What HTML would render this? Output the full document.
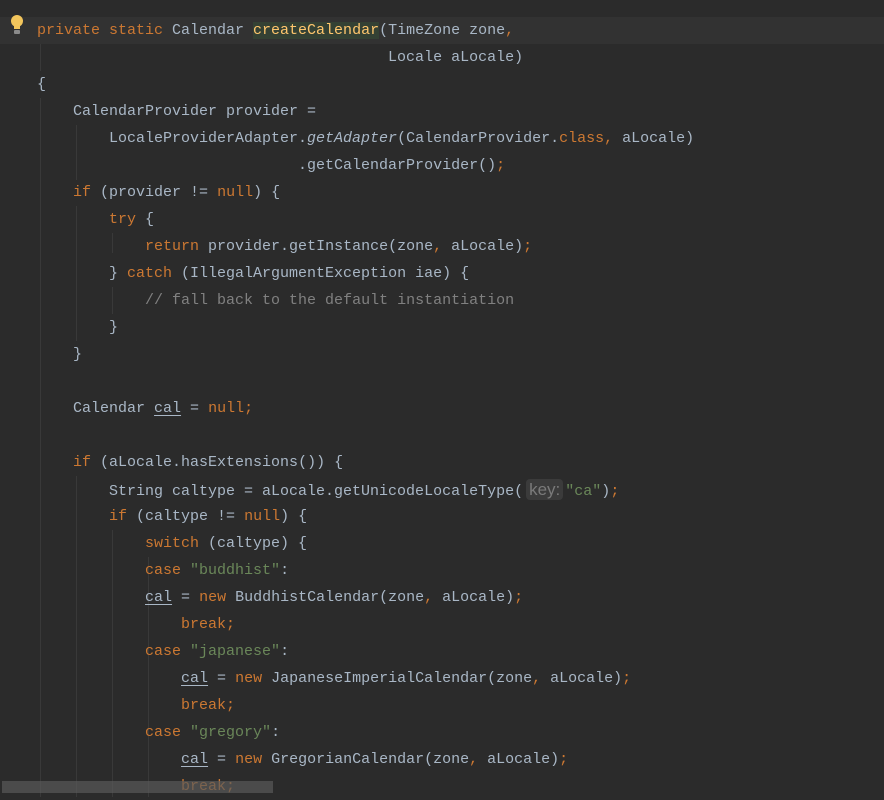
<!DOCTYPE html>
<html><head><meta charset="utf-8"><style>
html,body{margin:0;padding:0;}
body{width:884px;height:797px;background:#2b2b2b;overflow:hidden;position:relative;font-family:"Liberation Mono",monospace;font-size:15px;color:#a9b7c6;}
.cur{position:absolute;left:0;top:17px;width:884px;height:27px;background:#323232;}
.g{position:absolute;width:1px;background:#393939;}
.l{position:absolute;left:37px;height:27px;line-height:27px;white-space:pre;}
.k{color:#cc7832}.s{color:#6a8759}.c{color:#808080}.m{color:#ffc66d;background:#344134}.i{font-style:italic}
.u{text-decoration:underline;text-underline-offset:3px}
.h{font-family:"Liberation Sans",sans-serif;font-size:17px;color:#7a7a7a;background:#3b3b3b;border-radius:4px;padding:1px 3px;margin:0 2px 0 3px}
.sb{position:absolute;left:2px;top:781px;width:271px;height:12px;background:rgba(90,90,90,0.7);}
</style></head><body>
<div class="cur"></div>
<div class="g" style="left:40px;top:44px;height:27px"></div>
<div class="g" style="left:40px;top:98px;height:699px"></div>
<div class="g" style="left:76px;top:125px;height:55px"></div>
<div class="g" style="left:76px;top:206px;height:135px"></div>
<div class="g" style="left:112px;top:233px;height:20px"></div>
<div class="g" style="left:112px;top:287px;height:27px"></div>
<div class="g" style="left:76px;top:476px;height:321px"></div>
<div class="g" style="left:112px;top:530px;height:267px"></div>
<div class="g" style="left:148px;top:557px;height:240px"></div>
<svg style="position:absolute;left:8px;top:14px" width="18" height="22" viewBox="0 0 18 22"><circle cx="9" cy="7" r="6" fill="#f2c55c"/><rect x="6" y="12" width="6" height="3" fill="#f2c55c"/><rect x="6" y="16" width="6" height="4" rx="1" fill="#8a8a8a"/></svg>
<div class="l" style="top:17px"><span class="k">private static </span>Calendar <span class="m">createCalendar</span>(TimeZone zone<span class="k">,</span></div>
<div class="l" style="top:44px">                                       Locale aLocale)</div>
<div class="l" style="top:71px">{</div>
<div class="l" style="top:98px">    CalendarProvider provider =</div>
<div class="l" style="top:125px">        LocaleProviderAdapter.<span class="i">getAdapter</span>(CalendarProvider.<span class="k">class, </span>aLocale)</div>
<div class="l" style="top:152px">                             .getCalendarProvider()<span class="k">;</span></div>
<div class="l" style="top:179px">    <span class="k">if </span>(provider != <span class="k">null</span>) {</div>
<div class="l" style="top:206px">        <span class="k">try </span>{</div>
<div class="l" style="top:233px">            <span class="k">return </span>provider.getInstance(zone<span class="k">, </span>aLocale)<span class="k">;</span></div>
<div class="l" style="top:260px">        } <span class="k">catch </span>(IllegalArgumentException iae) {</div>
<div class="l" style="top:287px">            <span class="c">// fall back to the default instantiation</span></div>
<div class="l" style="top:314px">        }</div>
<div class="l" style="top:341px">    }</div>
<div class="l" style="top:395px">    Calendar <span class="u">cal</span> = <span class="k">null;</span></div>
<div class="l" style="top:449px">    <span class="k">if </span>(aLocale.hasExtensions()) {</div>
<div class="l" style="top:476px">        String caltype = aLocale.getUnicodeLocaleType(<span class="h">key:</span><span class="s">"ca"</span>)<span class="k">;</span></div>
<div class="l" style="top:503px">        <span class="k">if </span>(caltype != <span class="k">null</span>) {</div>
<div class="l" style="top:530px">            <span class="k">switch </span>(caltype) {</div>
<div class="l" style="top:557px">            <span class="k">case </span><span class="s">"buddhist"</span>:</div>
<div class="l" style="top:584px">            <span class="u">cal</span> = <span class="k">new </span>BuddhistCalendar(zone<span class="k">, </span>aLocale)<span class="k">;</span></div>
<div class="l" style="top:611px">                <span class="k">break;</span></div>
<div class="l" style="top:638px">            <span class="k">case </span><span class="s">"japanese"</span>:</div>
<div class="l" style="top:665px">                <span class="u">cal</span> = <span class="k">new </span>JapaneseImperialCalendar(zone<span class="k">, </span>aLocale)<span class="k">;</span></div>
<div class="l" style="top:692px">                <span class="k">break;</span></div>
<div class="l" style="top:719px">            <span class="k">case </span><span class="s">"gregory"</span>:</div>
<div class="l" style="top:746px">                <span class="u">cal</span> = <span class="k">new </span>GregorianCalendar(zone<span class="k">, </span>aLocale)<span class="k">;</span></div>
<div class="l" style="top:773px">                <span class="k">break;</span></div>
<div class="sb"></div>
</body></html>
